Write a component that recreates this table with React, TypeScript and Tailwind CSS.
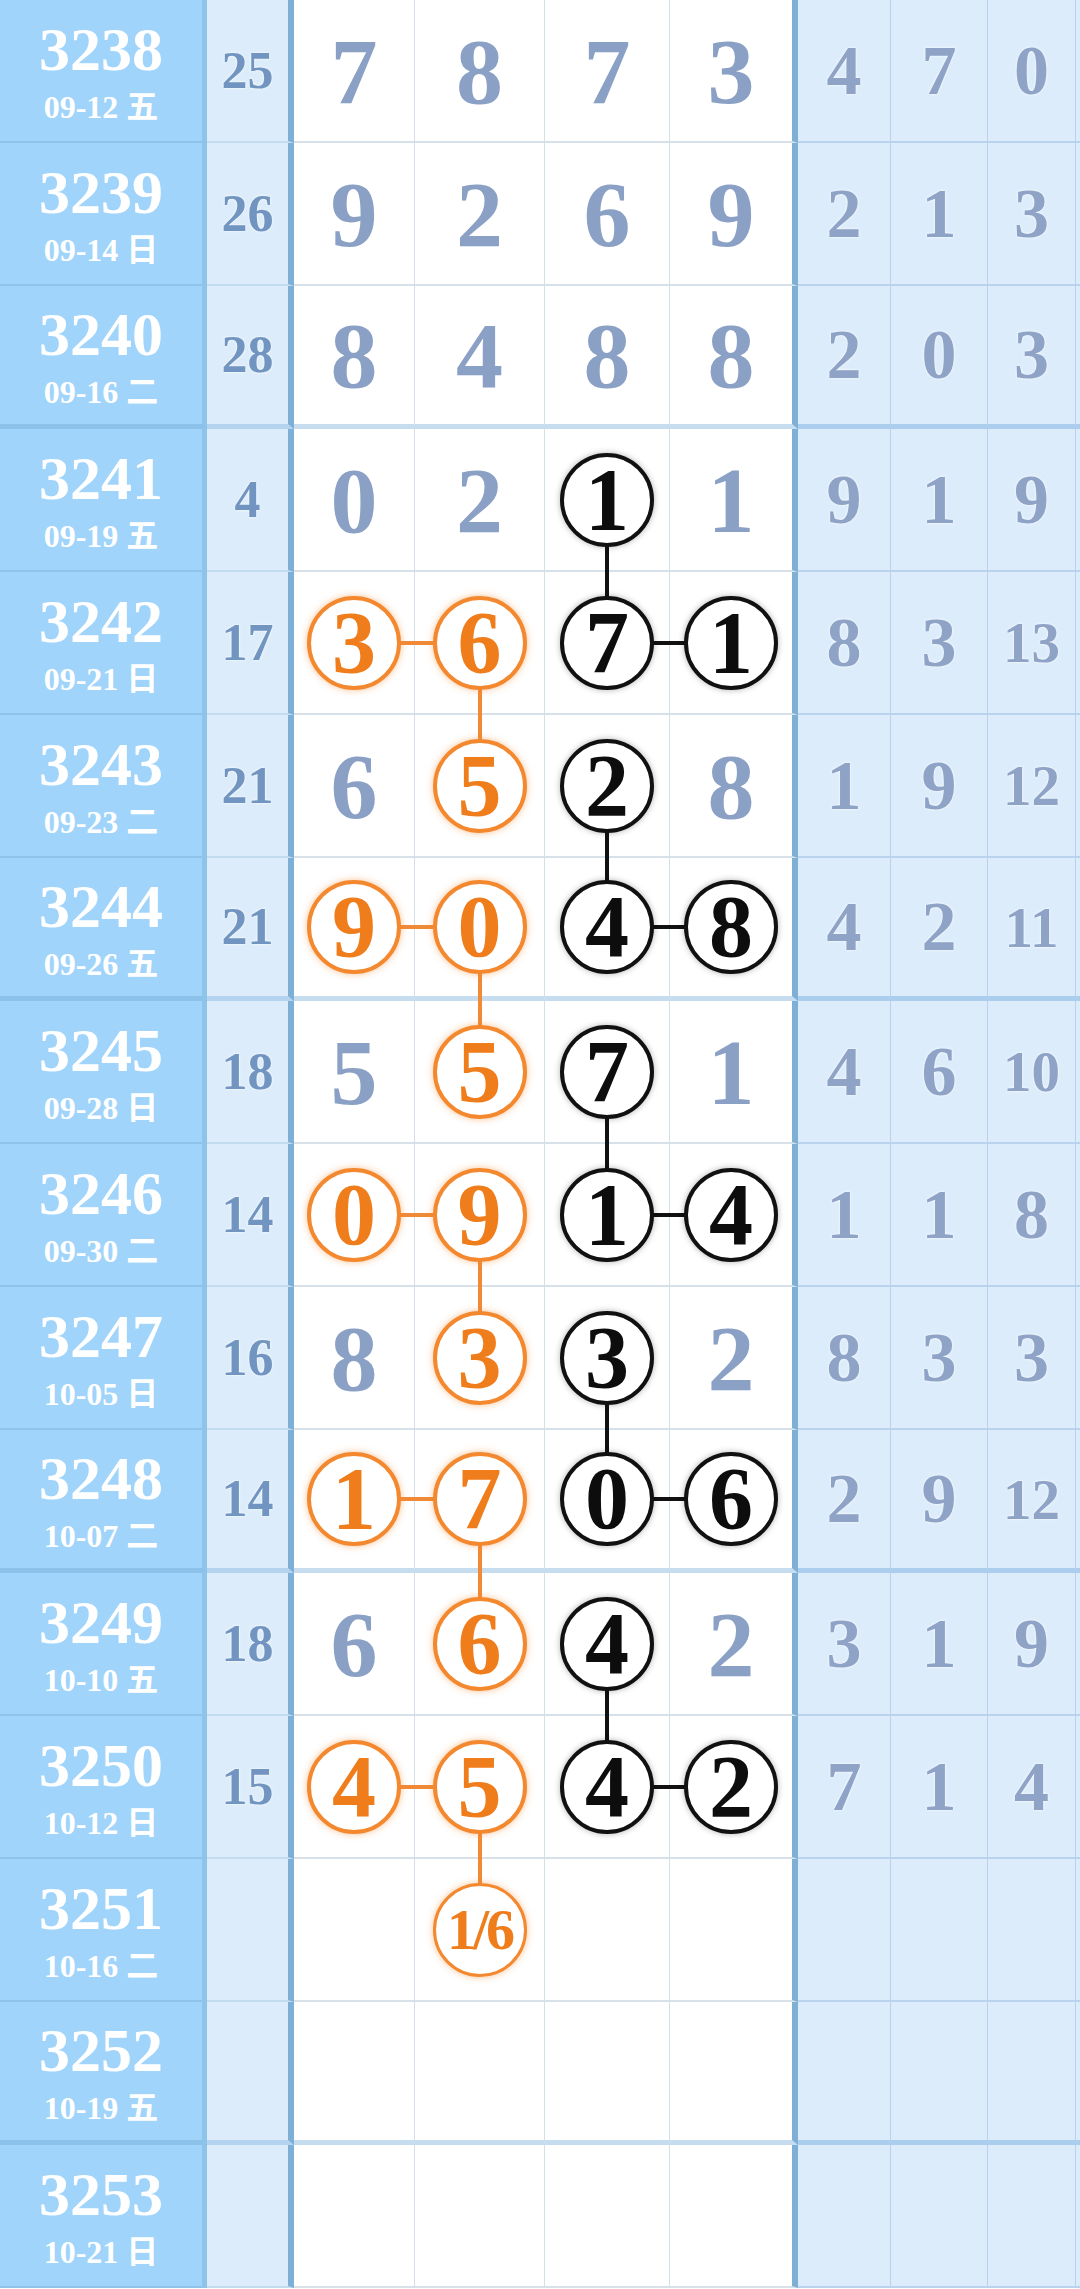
import React from 'react';

interface Row {
  no: string;
  date: string;
  wk: string;
  sum: string;
  d: string[];
  r: string[];
}

const rows: Row[] = [
  { no: '3238', date: '09-12', wk: '五', sum: '25', d: ['7', '8', '7', '3'], r: ['4', '7', '0'] },
  { no: '3239', date: '09-14', wk: '日', sum: '26', d: ['9', '2', '6', '9'], r: ['2', '1', '3'] },
  { no: '3240', date: '09-16', wk: '二', sum: '28', d: ['8', '4', '8', '8'], r: ['2', '0', '3'] },
  { no: '3241', date: '09-19', wk: '五', sum: '4', d: ['0', '2', '1', '1'], r: ['9', '1', '9'] },
  { no: '3242', date: '09-21', wk: '日', sum: '17', d: ['3', '6', '7', '1'], r: ['8', '3', '13'] },
  { no: '3243', date: '09-23', wk: '二', sum: '21', d: ['6', '5', '2', '8'], r: ['1', '9', '12'] },
  { no: '3244', date: '09-26', wk: '五', sum: '21', d: ['9', '0', '4', '8'], r: ['4', '2', '11'] },
  { no: '3245', date: '09-28', wk: '日', sum: '18', d: ['5', '5', '7', '1'], r: ['4', '6', '10'] },
  { no: '3246', date: '09-30', wk: '二', sum: '14', d: ['0', '9', '1', '4'], r: ['1', '1', '8'] },
  { no: '3247', date: '10-05', wk: '日', sum: '16', d: ['8', '3', '3', '2'], r: ['8', '3', '3'] },
  { no: '3248', date: '10-07', wk: '二', sum: '14', d: ['1', '7', '0', '6'], r: ['2', '9', '12'] },
  { no: '3249', date: '10-10', wk: '五', sum: '18', d: ['6', '6', '4', '2'], r: ['3', '1', '9'] },
  { no: '3250', date: '10-12', wk: '日', sum: '15', d: ['4', '5', '4', '2'], r: ['7', '1', '4'] },
  { no: '3251', date: '10-16', wk: '二', sum: '', d: ['', '1/6', '', ''], r: ['', '', ''] },
  { no: '3252', date: '10-19', wk: '五', sum: '', d: ['', '', '', ''], r: ['', '', ''] },
  { no: '3253', date: '10-21', wk: '日', sum: '', d: ['', '', '', ''], r: ['', '', ''] },
];

type Tone = 'o' | 'b';
interface Mark {
  tone: Tone;
  hR?: boolean;
  hL?: boolean;
  vD?: boolean;
  vU?: boolean;
}

// orange pairs start on 3242, black pairs on 3241, every two rows
const orangeTop = [4, 6, 8, 10, 12];
const blackTop = [3, 5, 7, 9, 11];

function markFor(i: number, c: number): Mark | null {
  if (orangeTop.includes(i)) {
    if (c === 0) return { tone: 'o', hR: true };
    if (c === 1) return { tone: 'o', hL: true, vD: true };
  }
  if (orangeTop.includes(i - 1) && c === 1) return { tone: 'o', vU: true };
  if (blackTop.includes(i) && c === 2) return { tone: 'b', vD: true };
  if (blackTop.includes(i - 1)) {
    if (c === 2) return { tone: 'b', vU: true, hR: true };
    if (c === 3) return { tone: 'b', hL: true };
  }
  return null;
}

const serif = "font-['Liberation_Serif','Noto_Sans_CJK_SC',serif] font-bold";
const colW = ['w-[121px]', 'w-[130px]', 'w-[125px]', 'w-[128px]'];
const rightW = ['w-[93px]', 'w-[97px]', 'w-[88px]'];

function DigitCell({ v, c, i, group }: { v: string; c: number; i: number; group: boolean }) {
  const m = markFor(i, c);
  const last = c === 3;
  const line = m?.tone === 'o' ? 'bg-[#f18a36]' : 'bg-[#111]';
  return (
    <div
      className={`relative flex h-full shrink-0 items-center justify-center bg-white ${colW[c]} ${
        last ? 'border-r-[6px] border-r-[#7eafd6]' : 'border-r border-r-[#d3e0e9]'
      } ${group ? 'border-b-[5px] border-b-[#c6dcef]' : 'border-b-2 border-b-[#d6e1e9]'}`}
    >
      {m?.hR && <div className={`absolute left-1/2 top-1/2 -right-px h-[4px] -translate-y-1/2 ${line}`} />}
      {m?.hL && <div className={`absolute left-0 right-1/2 top-1/2 h-[4px] -translate-y-1/2 ${line}`} />}
      {m?.vD && (
        <div
          className={`absolute left-1/2 top-1/2 w-[4px] -translate-x-1/2 ${line} ${
            group ? '-bottom-[5px]' : '-bottom-[2px]'
          }`}
        />
      )}
      {m?.vU && <div className={`absolute left-1/2 top-0 bottom-1/2 w-[4px] -translate-x-1/2 ${line}`} />}
      {m ? (
        <div
          className={`relative z-10 flex h-[94px] w-[94px] items-center justify-center rounded-full bg-white ${
            m.tone === 'o'
              ? 'border-[#f3882e] text-[#f07d1c] shadow-[0_0_7px_rgba(244,136,44,0.5)]'
              : 'border-[#111] text-[#0d0d0d] shadow-[0_0_6px_rgba(0,0,0,0.3)]'
          } ${v === '1/6' ? 'border-[3px]' : 'border-[4px]'}`}
        >
          {v === '1/6' ? (
            <span className={`${serif} text-[58px] leading-none tracking-[-3px]`}>1/6</span>
          ) : (
            <span className={`${serif} text-[88px] leading-none`}>{v}</span>
          )}
        </div>
      ) : (
        <span className={`${serif} text-[94px] leading-none text-[#8aa0c5] [text-shadow:0_0_3px_#fff]`}>{v}</span>
      )}
    </div>
  );
}

export default function App() {
  return (
    <div className="flex w-[1080px] flex-col overflow-hidden bg-white">
      {rows.map((row, i) => {
        const group = i % 4 === 2;
        return (
          <div key={row.no} className="flex h-[143px] w-[1080px]">
            <div
              className={`flex h-full w-[207px] shrink-0 flex-col items-center justify-center gap-[11px] border-r-[5px] border-r-[#8fc4ea] bg-[#a0d4fa] text-white ${serif} ${
                group ? 'border-b-[5px] border-b-[#8cc1e9]' : 'border-b-2 border-b-[#8fc3e9]'
              }`}
            >
              <div className="text-[62px] leading-none">{row.no}</div>
              <div className="text-[32px] leading-none">
                {row.date} {row.wk}
              </div>
            </div>
            <div
              className={`flex h-full w-[87px] shrink-0 items-center justify-center border-r-[6px] border-r-[#7eafd6] bg-[#dcecfa] ${
                group ? 'border-b-[5px] border-b-[#b3d3ef]' : 'border-b-2 border-b-[#c2dbef]'
              }`}
            >
              <span className={`${serif} text-[52px] leading-none text-[#7195c0] [text-shadow:0_0_3px_#fff]`}>
                {row.sum}
              </span>
            </div>
            {row.d.map((v, c) => (
              <DigitCell key={c} v={v} c={c} i={i} group={group} />
            ))}
            {row.r.map((v, c) => (
              <div
                key={c}
                className={`flex h-full shrink-0 items-center justify-center border-r border-r-[#b7d1ee] bg-[#dcecfb] ${rightW[c]} ${
                  group ? 'border-b-[5px] border-b-[#abcdee]' : 'border-b-2 border-b-[#b9d3ee]'
                }`}
              >
                <span
                  className={`${serif} leading-none text-[#8ea3c6] [text-shadow:0_0_3px_#fff] ${
                    v.length > 1 ? 'text-[57px]' : 'text-[70px]'
                  }`}
                >
                  {v}
                </span>
              </div>
            ))}
            <div
              className={`h-full flex-1 bg-[#dcecfb] ${
                group ? 'border-b-[5px] border-b-[#abcdee]' : 'border-b-2 border-b-[#b9d3ee]'
              }`}
            />
          </div>
        );
      })}
    </div>
  );
}
